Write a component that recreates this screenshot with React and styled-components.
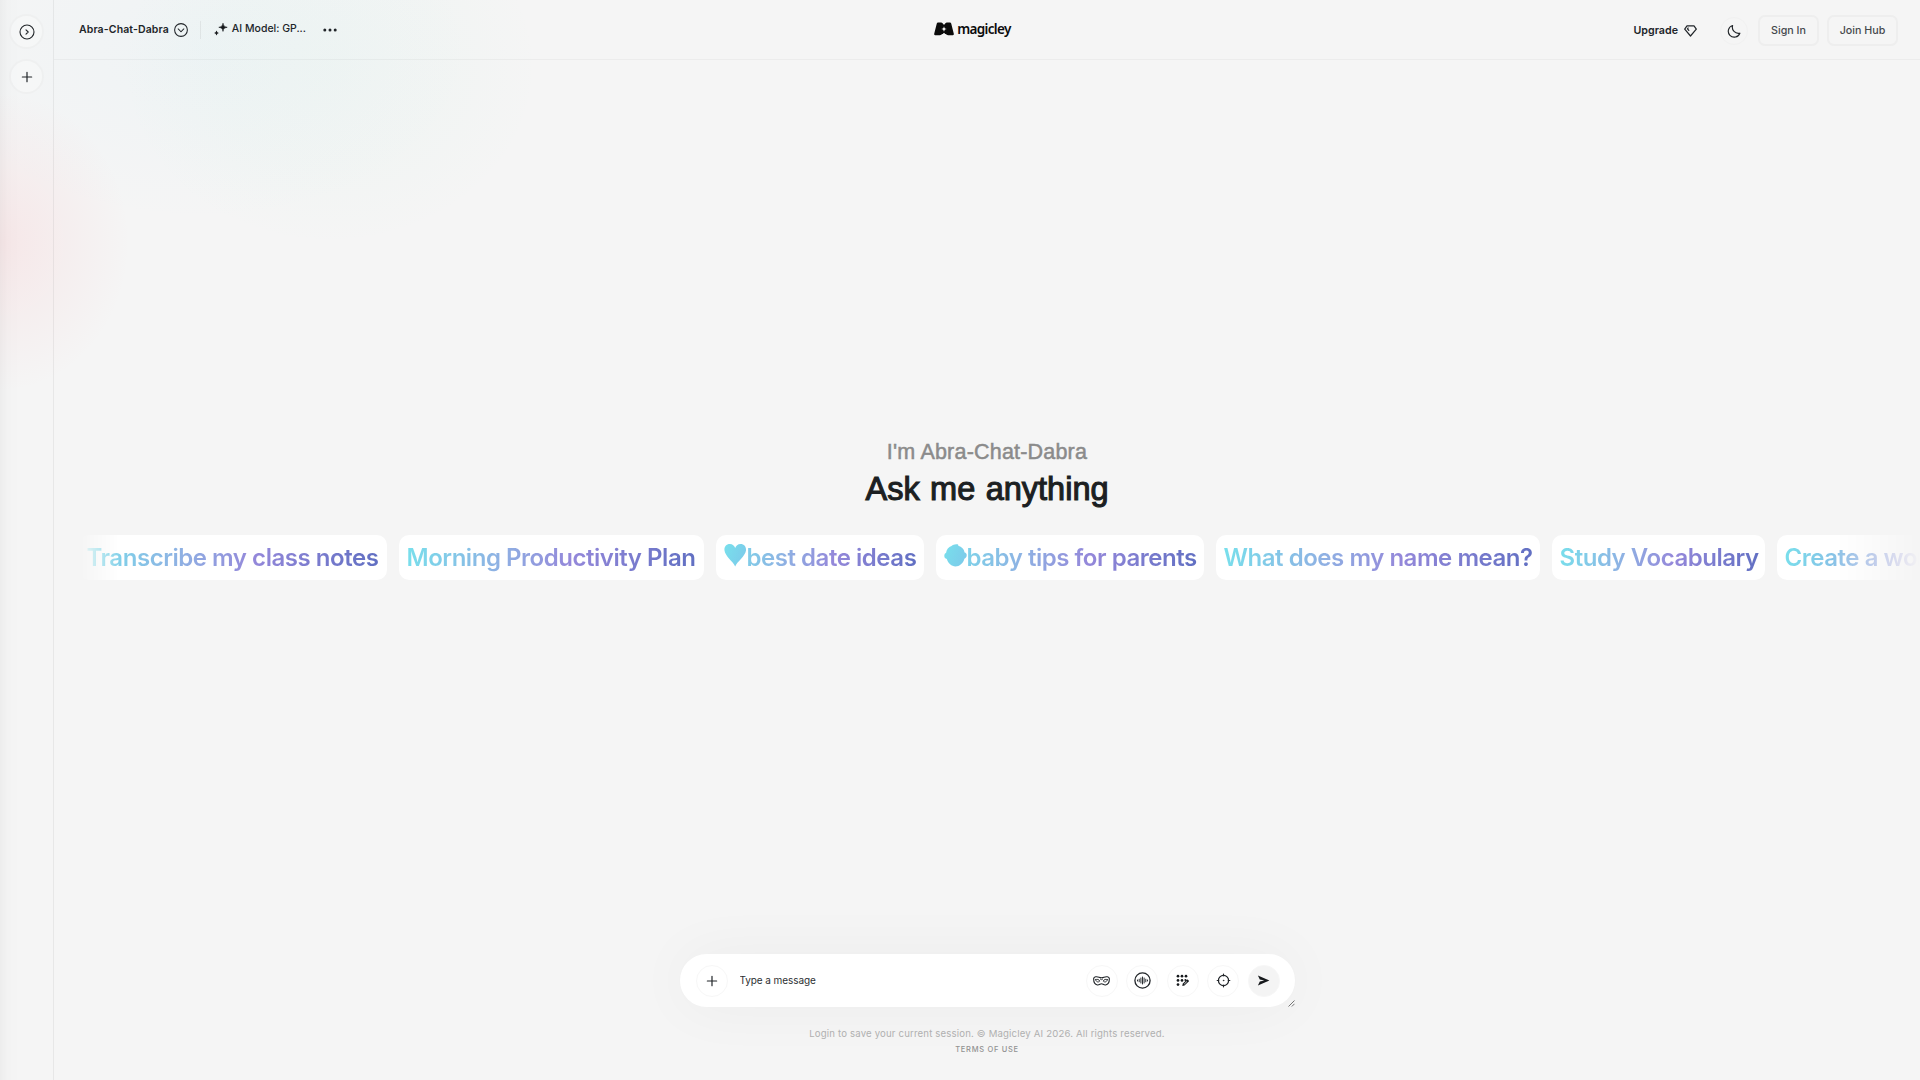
import React from "react";
import styled, { createGlobalStyle } from "styled-components";

const Global = createGlobalStyle`
  *, *::before, *::after { box-sizing: border-box; }
  body { margin: 0; font-family: Inter, "Liberation Sans", sans-serif; color: #212529; }
  button, input { font: inherit; color: inherit; border: 0; background: none; padding: 0; }
  svg { display: block; flex: none; }
`;

const Page = styled.div`
  display: grid;
  grid-template-columns: 54px 1fr;
  width: 1920px;
  height: 1080px;
  overflow: hidden;
  background:
    radial-gradient(ellipse 130px 150px at 0 242px, rgba(255, 105, 115, 0.1), rgba(255, 105, 115, 0.05) 48%, rgba(255, 105, 115, 0) 100%),
    radial-gradient(ellipse 210px 180px at 330px 66px, rgba(110, 230, 180, 0.035), rgba(110, 230, 180, 0.022) 55%, rgba(110, 230, 180, 0) 100%),
    radial-gradient(ellipse 270px 170px at 200px 50px, rgba(130, 215, 250, 0.055), rgba(130, 215, 250, 0) 100%),
    #f5f5f5;
`;

const Sidebar = styled.aside`
  display: flex;
  flex-direction: column;
  align-items: center;
  gap: 10px;
  padding-top: 14px;
  border-right: 1px solid rgba(0, 0, 0, 0.024);
  background: linear-gradient(90deg, rgba(0, 0, 0, 0.03), rgba(0, 0, 0, 0.008) 8px, rgba(0, 0, 0, 0) 20px);
`;

const RoundButton = styled.button`
  display: grid;
  place-items: center;
  flex: none;
  width: ${(p) => p.$size || 32}px;
  height: ${(p) => p.$size || 32}px;
  border-radius: 50%;
  color: #212529;
  border: ${(p) => p.$border || "1px solid #f7f7f7"};
  background: ${(p) => p.$fill || "transparent"};
`;

const Main = styled.main`
  display: grid;
  grid-template-rows: 60px 1fr auto;
  min-width: 0;
`;

const Header = styled.header`
  display: grid;
  grid-template-columns: 1fr auto 1fr;
  align-items: center;
  padding: 1px 22px 0 25px;
  border-bottom: 1px solid rgba(0, 0, 0, 0.035);
`;

const HeaderLeft = styled.div`
  display: flex;
  align-items: center;
`;

const HeaderRight = styled.div`
  display: flex;
  align-items: center;
  justify-content: flex-end;
  padding-top: 1px;
`;

const AppName = styled.span`
  font-size: 10.5px;
  font-weight: 600;
  line-height: 16px;
  letter-spacing: 0.12px;
  margin-right: 5px;
  white-space: nowrap;
`;

const Divider = styled.span`
  width: 1px;
  height: 18px;
  margin: 0 13px 0 12px;
  background: rgba(0, 0, 0, 0.06);
`;

const Model = styled.span`
  display: flex;
  align-items: center;
  gap: 4px;
  margin: 0 17px 2px 0;
  font-size: 10.5px;
  font-weight: 500;
  line-height: 16px;
  white-space: nowrap;
`;

const Logo = styled.div`
  display: flex;
  align-items: center;
  gap: 3px;
  margin-right: 32px;
  padding-bottom: 2px;
  color: #0b0b0b;
  font: 600 13.5px/18px "Noto Sans", sans-serif;
`;

const LogoText = styled.span`
  letter-spacing: -0.65px;
`;

const Upgrade = styled.button`
  display: flex;
  align-items: center;
  gap: 6px;
  margin-right: 23px;
  font-size: 10.7px;
  font-weight: 600;
`;

const OutlineButton = styled.button`
  width: ${(p) => p.$width}px;
  height: 31px;
  margin-left: ${(p) => p.$gap}px;
  border: 2px solid #eeeeee;
  border-radius: 7px;
  color: #44484c;
  font-size: 10.7px;
  font-weight: 500;
  white-space: nowrap;
`;

const Stage = styled.section`
  display: flex;
  flex-direction: column;
  align-items: center;
  min-width: 0;
  padding-top: 378px;
`;

const Intro = styled.p`
  margin: 0;
  font: 400 21.5px/28px "Liberation Sans", Arial, sans-serif;
  letter-spacing: 0.2px;
  color: #8b8b8b;
  -webkit-text-stroke: 0.5px #8b8b8b;
`;

const Title = styled.h1`
  margin: 0;
  font: 400 32.5px/46px "Liberation Sans", Arial, sans-serif;
  letter-spacing: 0;
  word-spacing: 1.4px;
  color: #1c1f22;
  -webkit-text-stroke: 1.1px #1c1f22;
`;

const Chips = styled.div`
  display: flex;
  align-self: stretch;
  justify-content: flex-start;
  gap: 12px;
  margin: 23px 0 0 25px;
  overflow: hidden;
  mask-image: linear-gradient(90deg, transparent, #000 42px, #000 calc(100% - 88px), transparent);
`;

const Chip = styled.button`
  display: flex;
  align-items: center;
  flex: none;
  width: ${(p) => p.$width}px;
  height: 45px;
  padding: 1px 7.5px 0;
  border-radius: 10px;
  background: #fff;
  white-space: nowrap;
`;

const ChipLabel = styled.span`
  font-size: 24px;
  font-weight: 600;
  line-height: 36px;
  letter-spacing: -0.46px;
  color: transparent;
  margin-left: ${(p) => (p.$icon ? -23 : 0)}px;
  padding-left: ${(p) => (p.$icon ? 23 : 0)}px;
  background: linear-gradient(100deg, #78e0ec 0%, #8fb0e3 33%, #9488da 57%, #606fc2 100%);
  background-clip: text;
  -webkit-background-clip: text;
`;

const EmojiSlot = styled.span`
  margin-top: -6px;
`;

const Bottom = styled.footer`
  display: flex;
  flex-direction: column;
  align-items: center;
  padding-bottom: 25px;
`;

const Composer = styled.form`
  display: flex;
  align-items: center;
  width: 615px;
  height: 53px;
  padding: 0 15px 0 16px;
  border-radius: 27px;
  background: #fff;
  box-shadow: 0 0 60px rgba(0, 0, 0, 0.042);
`;

const Message = styled.input`
  flex: 1;
  min-width: 0;
  margin: 0 0 1px 12px;
  outline: 0;
  font-size: 10px;
  letter-spacing: -0.08px;
  color: #212529;
  &::placeholder { color: #2c2f32; opacity: 1; }
`;

const Tools = styled.div`
  display: flex;
  gap: 8.5px;
`;

const Grip = styled.span`
  align-self: flex-end;
  width: 7px;
  margin-right: -15px;
  margin-left: 8px;
`;

const Legal = styled.p`
  margin: 18.5px 0 0;
  font-size: 9.6px;
  line-height: 16px;
  letter-spacing: 0.17px;
  color: #b0b0b0;
`;

const Terms = styled.a`
  margin-top: 3.5px;
  font-size: 7.5px;
  font-weight: 500;
  line-height: 10px;
  letter-spacing: 0.7px;
  color: #929292;
`;

const Line = ({ size, children, w = 1, ...rest }) => (
  <svg width={size} height={size} viewBox="0 0 16 16" fill="none" stroke="currentColor" strokeWidth={w} strokeLinecap="round" strokeLinejoin="round" {...rest}>
    {children}
  </svg>
);

const CircleRight = () => (
  <Line size={16} w={1.1}><circle cx="8" cy="8" r="7" /><path d="M7 5.8 9.2 8 7 10.2" /></Line>
);
const CircleDown = () => (
  <Line size={14} w={1.2}><circle cx="8" cy="8" r="7.3" /><path d="M4.8 6.8 8 10l3.2-3.2" /></Line>
);
const Plus = () => (
  <Line size={12} w={1.6}><path d="M8 1.8v12.4M1.8 8h12.4" /></Line>
);
const Sparkles = () => (
  <svg width="14" height="13" viewBox="0 0 14 13" fill="#16191c">
    <path d="M9 .2C9.5 3 10.2 3.7 13.2 4.3 10.2 4.9 9.5 5.6 9 8.4 8.5 5.6 7.8 4.9 4.8 4.3 7.8 3.7 8.5 3 9 .2Z" stroke="#16191c" strokeWidth=".6" strokeLinejoin="round" />
    <path d="M2.5 7.6 3.4 9.2 4.9 10 3.4 10.8 2.5 12.4 1.6 10.8.1 10 1.6 9.2Z" />
  </svg>
);
const Dots = () => (
  <svg width="14" height="4" viewBox="0 0 14 4" fill="#212529">
    <circle cx="1.8" cy="2" r="1.5" /><circle cx="7" cy="2" r="1.5" /><circle cx="12.2" cy="2" r="1.5" />
  </svg>
);
const LogoMark = () => (
  <svg width="20" height="14" viewBox="0 0 20 14">
    <path fill="#0b0b0b" d="M4 .6h3.200C8.200.6 8.700 1.800 10 1.800S11.800.6 12.800.6H16c.6 0 1 .3 1.200.9l2.600 10.300c.2.8-.2 1.400-1 1.400h-4.600c-1.200 0-2-1.500-4.200-1.500s-3 1.500-4.200 1.500H1.200c-.8 0-1.200-.6-1-1.400L2.800 1.500C3 .9 3.400.6 4 .6Z" />
    <path fill="#f5f5f5" d="M10 4.200c.4 1.900 1 2.500 2.900 2.800-1.900.4-2.500 1-2.900 2.800-.4-1.800-1-2.400-2.900-2.800 1.900-.3 2.500-.9 2.900-2.800ZM7.900.3h4.200L10 3.100ZM7.200 13.700 10 10.800l2.800 2.900Z" />
  </svg>
);
const Diamond = () => (
  <svg width="13" height="12" viewBox="0 0 13 12" fill="none" stroke="#212529" strokeWidth="1.2" strokeLinejoin="round" strokeLinecap="round">
    <path d="M3 .8h7l2.300 3.400-5.800 6.800L.7 4.200ZM4.800 5.400 3.500 3.900l.6-.9" />
  </svg>
);
const Moon = () => (
  <Line size={14} w={1.3}><path d="M6.400 1.700a7 7 0 0 0 8.300 8.800A6.800 6.800 0 1 1 6.400 1.700Z" /></Line>
);
const Mask = () => (
  <svg width="17" height="10" viewBox="0 0 17 10" fill="none" stroke="#212529" strokeWidth="1.1" strokeLinejoin="round" strokeLinecap="round">
    <path d="M.7 2.400C1 .6 3.800.3 6 1.200c1.700.7 3.300.7 5 0 2.200-.9 5-.6 5.300 1.200.2 3.200-1.100 6.100-3.700 6.600-1.900.3-2.700-1.300-4.100-1.300S6.300 9.300 4.400 9C1.800 8.500.5 5.600.7 2.400Z" />
    <path d="M2.700 3.700c1.500-.9 3.200-.3 4.100 1.400-1.400 1.500-3.700 1.100-4.100-1.400ZM14.300 3.700c-1.500-.9-3.200-.3-4.100 1.400 1.400 1.500 3.700 1.100 4.100-1.400ZM7.400 3.100l1.100.6 1.100-.6" strokeWidth=".9" />
  </svg>
);
const Voice = () => (
  <svg width="17" height="17" viewBox="0 0 17 17" fill="none" stroke="#212529" strokeWidth="1.3" strokeLinecap="round">
    <circle cx="8.5" cy="8.5" r="7.6" />
    <path strokeWidth=".95" d="M3.500 8v1M5.200 7.200v2.600M6.900 6v5M8.500 5v7M10.100 6v5M11.800 7.200v2.600M13.500 8v1" />
  </svg>
);
const GridPen = () => (
  <svg width="14" height="13" viewBox="0 0 14 13" fill="#16191c">
    {[2, 6, 10].map((x) => <circle key={x} cx={x} cy="2.2" r="1.35" />)}
    {[2, 6].map((x) => <circle key={x} cx={x} cy="6.4" r="1.35" />)}
    <circle cx="2" cy="10.6" r="1.35" />
    <circle cx="9.4" cy="6" r="1" />
    <path d="m6.300 11.900.4-2.200 4.200-4.100c.7-.6 2.500 1 1.800 1.800l-4.200 4.100Z" />
    <path d="m8.200 10.100 2.700-2.600" stroke="#fff" strokeWidth=".8" />
  </svg>
);
const Target = () => (
  <svg width="15" height="15" viewBox="0 0 15 15" fill="none" stroke="#212529" strokeWidth="1.2" strokeLinecap="round">
    <circle cx="7.5" cy="7.5" r="5.1" />
    <path d="M7.500 1.200v1.600M7.500 12.200v1.600M1.200 7.500h1.600M12.200 7.500h1.600" />
    <circle cx="7.5" cy="7.5" r=".4" fill="#212529" strokeWidth=".6" />
  </svg>
);
const Send = () => (
  <svg width="13" height="11" viewBox="0 0 13 11" fill="#16191c"><path d="M.9.5 12.400 5.500.9 10.500 2.800 6.400 7.300 5.500 2.800 4.600Z" /></svg>
);
const Heart = () => (
  <svg width="23" height="24" viewBox="0 0 23 24">
    <defs><linearGradient id="heart" x2="1" y2=".4"><stop stopColor="#78e0ec" /><stop offset="1" stopColor="#7cccea" /></linearGradient></defs>
    <path fill="url(#heart)" d="M11.200 23.400C9 18.500 1 13 .5 7.500 0 3.500 2.500 1 5.800 1 8.500 1 10.500 2.800 11.200 5c.7-2.200 2.600-4 5.300-4C20 1 22.400 3.700 22 7.500 21.400 13 13.300 18.500 11.200 23.400Z" />
  </svg>
);
const Baby = () => (
  <svg width="23" height="24" viewBox="0 0 23 24">
    <defs><linearGradient id="baby" x2="1" y2=".4"><stop stopColor="#78e0ec" /><stop offset="1" stopColor="#7cccea" /></linearGradient></defs>
    <path fill="url(#baby)" d="M7.500 3C9 1.500 11.500.8 13.500 1.300c.8.4.9 1 .8 1.500 3.500.8 5.700 3.300 6.300 6.700 1.300.2 2.300 1.300 2.100 3-.1 1.700-1.200 2.700-2.300 3.200-1.300 4.700-4.900 7.700-8.900 7.700S4.100 20.400 2.800 16C1.400 15.600.2 14.500.3 12.700c.1-1.500.8-2.400 1.800-2.900C2.500 6.500 4.500 4.200 7.500 3Z" />
  </svg>
);

const CHIPS = [
  { label: "Transcribe my class notes", width: 308 },
  { label: "Morning Productivity Plan", width: 305 },
  { label: "best date ideas", width: 208, icon: <Heart /> },
  { label: "baby tips for parents", width: 268, icon: <Baby /> },
  { label: "What does my name mean?", width: 324 },
  { label: "Study Vocabulary", width: 213 },
  { label: "Create a workout plan", width: 280 },
];

const TOOLS = [
  ["Persona", <Mask />],
  ["Voice", <Voice />],
  ["Prompts", <GridPen />],
  ["Focus", <Target />],
];

export default function App() {
  return (
    <>
      <Global />
      <Page>
        <Sidebar>
          <RoundButton aria-label="Expand" $size={35} $border="2px solid rgba(0,0,0,.028)" $fill="rgba(255,255,255,.25)"><CircleRight /></RoundButton>
          <RoundButton aria-label="New chat" $size={35} $border="2px solid rgba(0,0,0,.028)" $fill="rgba(255,255,255,.25)"><Plus /></RoundButton>
        </Sidebar>
        <Main>
          <Header>
            <HeaderLeft>
              <AppName>Abra-Chat-Dabra</AppName>
              <CircleDown />
              <Divider />
              <Model><Sparkles />AI Model: GP...</Model>
              <Dots />
            </HeaderLeft>
            <Logo><LogoMark /><LogoText>magicley</LogoText></Logo>
            <HeaderRight>
              <Upgrade>Upgrade<Diamond /></Upgrade>
              <RoundButton aria-label="Theme" $size={28} $border="1px solid #f1f1f1"><Moon /></RoundButton>
              <OutlineButton $width={61} $gap={10}>Sign In</OutlineButton>
              <OutlineButton $width={71} $gap={8}>Join Hub</OutlineButton>
            </HeaderRight>
          </Header>
          <Stage>
            <Intro>I'm Abra-Chat-Dabra</Intro>
            <Title>Ask me anything</Title>
            <Chips>
              {CHIPS.map((c) => (
                <Chip key={c.label} $width={c.width}>
                  {c.icon && <EmojiSlot>{c.icon}</EmojiSlot>}
                  <ChipLabel $icon={Boolean(c.icon)}>{c.label}</ChipLabel>
                </Chip>
              ))}
            </Chips>
          </Stage>
          <Bottom>
            <Composer>
              <RoundButton type="button" aria-label="Attach"><Plus /></RoundButton>
              <Message placeholder="Type a message" />
              <Tools>
                {TOOLS.map(([name, icon]) => (
                  <RoundButton key={name} type="button" aria-label={name}>{icon}</RoundButton>
                ))}
                <RoundButton type="button" aria-label="Send" $fill="#f4f4f4"><Send /></RoundButton>
              </Tools>
              <Grip>
                <svg width="7" height="7" viewBox="0 0 7 7" stroke="#666" strokeWidth=".9"><path d="M.5 6.500l6-6M3.800 6.500l2.700-2.700" /></svg>
              </Grip>
            </Composer>
            <Legal>Login to save your current session. © Magicley AI 2026. All rights reserved.</Legal>
            <Terms>TERMS OF USE</Terms>
          </Bottom>
        </Main>
      </Page>
    </>
  );
}
